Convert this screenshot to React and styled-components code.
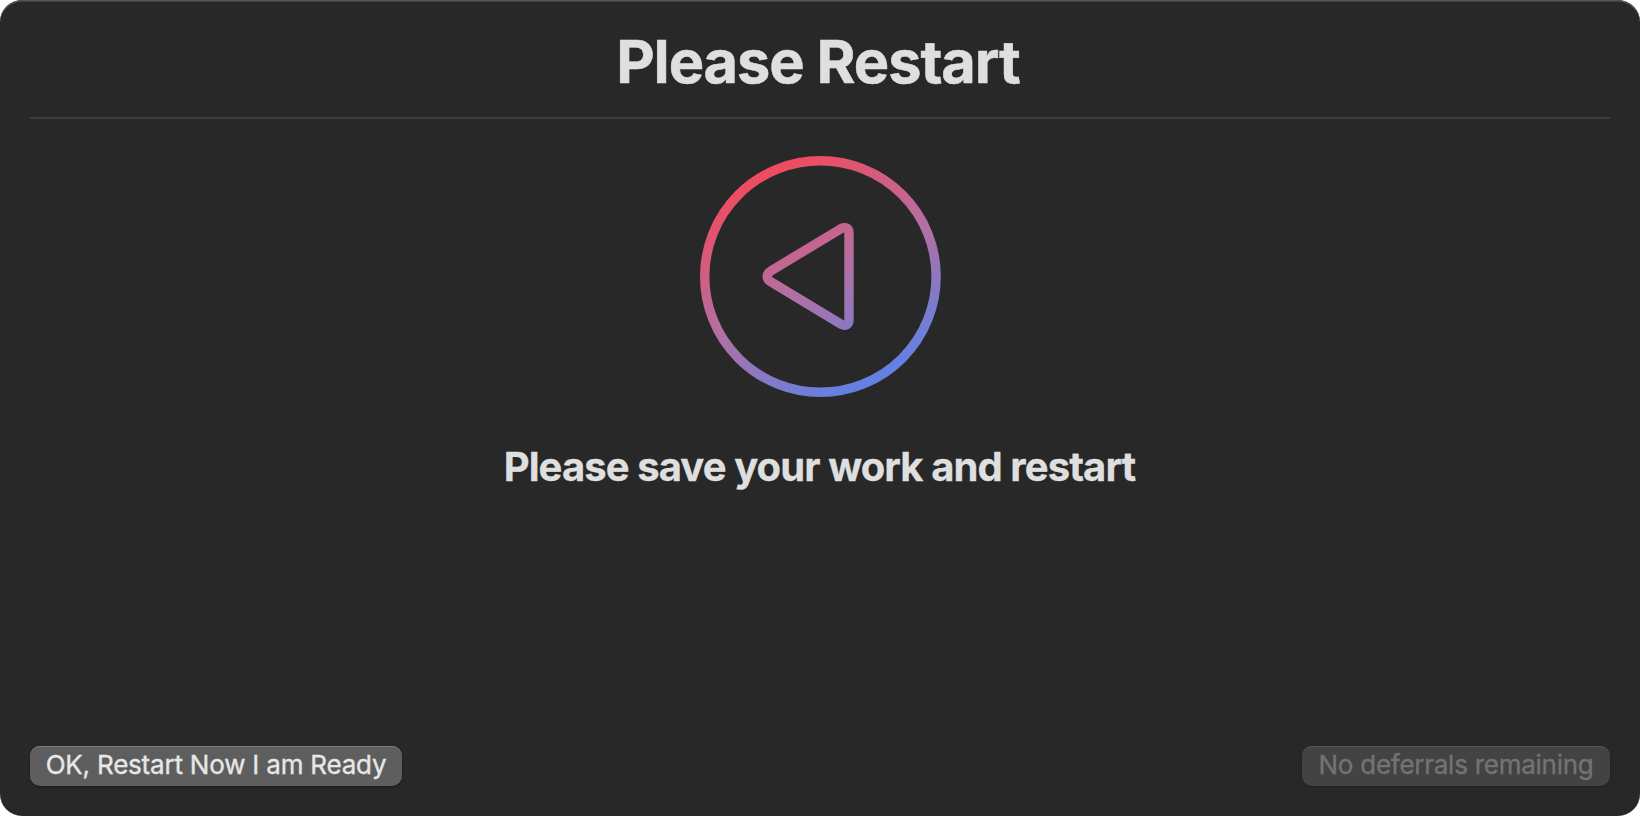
import React from 'react';
import styled, { createGlobalStyle } from 'styled-components';

const GlobalStyle = createGlobalStyle`
  body { margin: 0; background: #fff; }
  * { box-sizing: border-box; }
`;

const Dialog = styled.main`
  width: 1640px;
  height: 816px;
  display: flex;
  flex-direction: column;
  padding: 0 30px 30px;
  border-radius: 22px;
  background: #282828;
  box-shadow: inset 0 1.5px 0 #565656;
  color: #dfdfdf;
  font-family: Inter, 'Liberation Sans', sans-serif;
`;

const Header = styled.header`
  height: 119px;
  display: flex;
  justify-content: center;
  padding: 25px 4px 0 0;
  border-bottom: 2px solid #3d3d3d;
`;

const Title = styled.h1`
  margin: 0;
  font-size: 59.5px;
  line-height: 72px;
  font-weight: 700;
  letter-spacing: -1.1px;
  -webkit-text-stroke: 0.5px currentColor;
  white-space: nowrap;
`;

const Content = styled.section`
  flex: 1;
  display: flex;
  flex-direction: column;
  align-items: center;
  padding-top: 37px;
`;

const RestartIcon = styled.svg`
  width: 242px;
  height: 242px;
  display: block;
`;

const Message = styled.h2`
  margin: 45px 0 0;
  padding-right: 1px;
  font-size: 40px;
  line-height: 48px;
  font-weight: 700;
  letter-spacing: -0.91px;
  -webkit-text-stroke: 0.3px currentColor;
  white-space: nowrap;
`;

const Footer = styled.footer`
  display: flex;
  justify-content: space-between;
`;

const Button = styled.button`
  width: ${({ $width }) => $width}px;
  height: 40px;
  padding: 0 0 2px;
  border: 0;
  border-radius: 10px;
  font: 400 26px/38px Inter, 'Liberation Sans', sans-serif;
  letter-spacing: ${({ $tracking }) => $tracking}px;
  -webkit-text-stroke: 0.35px currentColor;
  white-space: nowrap;
  color: #e7e7e7;
  background: #5e5e5e;
  box-shadow: inset 0 1px 0 #7b7b7b, 0 1px 2px rgba(0, 0, 0, 0.4);

  &:disabled {
    color: #737373;
    background: #434343;
    box-shadow: inset 0 1px 0 #545454, 0 1px 2px rgba(0, 0, 0, 0.2);
  }
`;

export default function App() {
  return (
    <>
      <GlobalStyle />
      <Dialog>
        <Header>
          <Title>Please Restart</Title>
        </Header>
        <Content>
          <RestartIcon viewBox="0 0 242 242" fill="none" aria-hidden="true">
            <defs>
              <linearGradient id="ring" gradientUnits="userSpaceOnUse" x1="69" y1="21" x2="174" y2="223">
                <stop offset="0" stopColor="#ee4c61" />
                <stop offset="0.5" stopColor="#b46fa2" />
                <stop offset="1" stopColor="#6381e3" />
              </linearGradient>
            </defs>
            <g stroke="url(#ring)" strokeWidth="9.4">
              <circle cx="121.4" cy="120.5" r="115.7" />
              <path d="M142.3 72.5 L72.2 114.7 Q68.2 117.2 68.2 120.4 Q68.2 123.6 72.2 126.1 L142.3 168.3 Q145.2 169.8 147.8 168.7 Q150 167.2 150 164 V76.8 Q150 73.6 147.8 72.1 Q145.2 71 142.3 72.5 Z" />
            </g>
          </RestartIcon>
          <Message>Please save your work and restart</Message>
        </Content>
        <Footer>
          <Button $width={372} $tracking={-0.2}>OK, Restart Now I am Ready</Button>
          <Button $width={308} $tracking={-0.26} disabled>No deferrals remaining</Button>
        </Footer>
      </Dialog>
    </>
  );
}
